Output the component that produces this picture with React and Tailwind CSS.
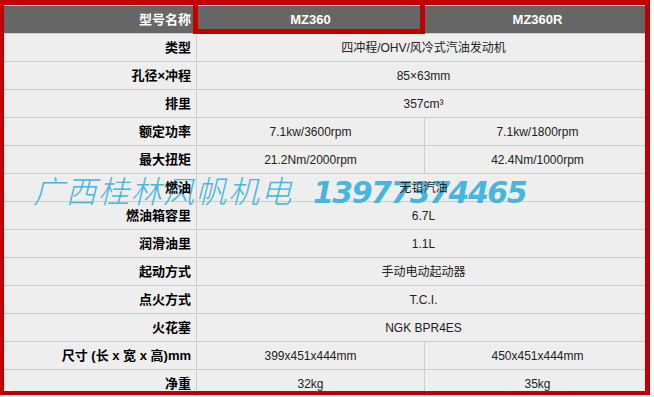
import React from 'react';

const rows = [
  ['类型', '四冲程/OHV/风冷式汽油发动机'],
  ['孔径×冲程', '85×63mm'],
  ['排里', '357cm³'],
  ['额定功率', '7.1kw/3600rpm', '7.1kw/1800rpm'],
  ['最大扭矩', '21.2Nm/2000rpm', '42.4Nm/1000rpm'],
  ['燃油', '无铅汽油'],
  ['燃油箱容里', '6.7L'],
  ['润滑油里', '1.1L'],
  ['起动方式', '手动电动起动器'],
  ['点火方式', 'T.C.I.'],
  ['火花塞', 'NGK BPR4ES'],
  ['尺寸 (长 x 宽 x 高)mm', '399x451x444mm', '450x451x444mm'],
  ['净重', '32kg', '35kg'],
];

export default function App() {
  return (
    <div className="relative w-[654px] h-[397px] overflow-hidden bg-white font-['Liberation_Sans','Noto_Sans_CJK_SC',sans-serif]">
      {/* spec table */}
      <div className="mt-[5px] w-[650px] grid grid-cols-[196px_227px_1fr] auto-rows-[27px] gap-px pt-px bg-[#cccccc]">
        <div className="bg-[#666666] flex items-center justify-end pr-[5px] text-white font-bold text-[13px]">型号名称</div>
        <div className="relative bg-[#666666] flex items-center justify-center text-white font-bold text-[13px]">
          MZ360
          <div className="absolute left-[-4px] top-[-6px] right-[-1px] bottom-[-1px] border-[5px] border-[#c00000]" />
        </div>
        <div className="bg-[#666666] flex items-center justify-center text-white font-bold text-[13px]">MZ360R</div>

        {rows.map((r) => (
          <React.Fragment key={r[0]}>
            <div className="bg-[#eeeeee] flex items-center justify-end pr-[5px] text-black font-bold text-[13px]">
              <span className="relative z-10">{r[0]}</span>
            </div>
            {r.length === 2 ? (
              <div className="col-span-2 bg-[#eeeeee] flex items-center justify-center text-[#222] text-[12px]">
                <span className="relative z-10">{r[1]}</span>
              </div>
            ) : (
              <>
                <div className="bg-[#eeeeee] flex items-center justify-center text-[#222] text-[12px]">
                  <span className="relative z-10">{r[1]}</span>
                </div>
                <div className="bg-[#eeeeee] flex items-center justify-center text-[#222] text-[12px]">
                  <span className="relative z-10">{r[2]}</span>
                </div>
              </>
            )}
          </React.Fragment>
        ))}
      </div>

      {/* watermark */}
      <div className="absolute left-[33px] top-[167px] flex items-baseline whitespace-nowrap text-[#48b6dc] italic z-[5] pointer-events-none">
        <span className="text-[31px] font-light tracking-[1.5px] font-['Noto_Sans_CJK_SC',sans-serif]">广西桂林风帆机电</span>
        <span className="ml-[20px] text-[30px] font-bold font-['DejaVu_Sans',sans-serif] tracking-[-1.5px]">13977374465</span>
      </div>

      {/* red frame */}
      <div className="absolute left-0 top-0 w-[650px] h-[395px] border-l-4 border-t-[5px] border-r-[5px] border-b-4 border-[#c00000] z-20 pointer-events-none" />
    </div>
  );
}
